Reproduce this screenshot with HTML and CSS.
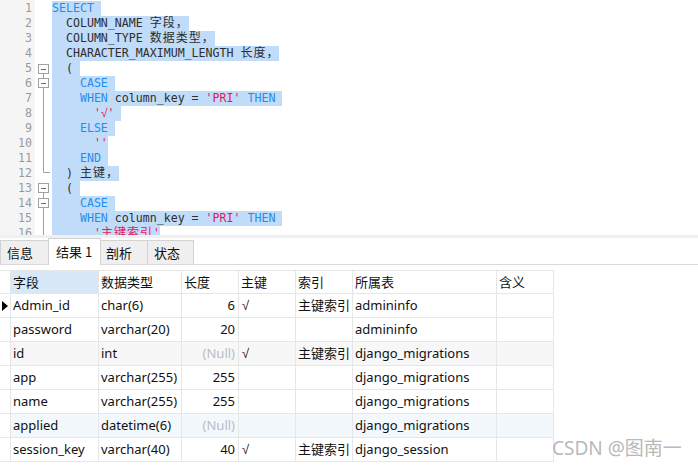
FILE: index.html
```html
<!DOCTYPE html>
<html lang="zh">
<head>
<meta charset="utf-8">
<title>SQL</title>
<link rel="stylesheet" href="styles.css">
</head>
<body>
<div class="page">
  <div class="editor">
    <div class="gutter">
      <div class="ln">1</div><div class="ln">2</div><div class="ln">3</div><div class="ln">4</div>
      <div class="ln">5</div><div class="ln">6</div><div class="ln">7</div><div class="ln">8</div>
      <div class="ln">9</div><div class="ln">10</div><div class="ln">11</div><div class="ln">12</div>
      <div class="ln">13</div><div class="ln">14</div><div class="ln">15</div><div class="ln">16</div>
    </div>
    <svg class="folds" width="17" height="235" viewBox="0 0 17 235">
      <g fill="#fff" stroke="#a0a0a0" stroke-width="1">
        <rect x="3.5" y="64.5" width="10" height="9"/>
        <rect x="3.5" y="78.5" width="10" height="9"/>
        <rect x="3.5" y="183.5" width="10" height="9"/>
        <rect x="3.5" y="198.5" width="10" height="9"/>
      </g>
      <g fill="none" stroke="#a0a0a0" stroke-width="1">
        <path d="M8.5 73.5V78.5"/>
        <path d="M8.5 87.5V172.5H15"/>
        <path d="M8.5 192.5V198.5"/>
        <path d="M8.5 207.5V235"/>
      </g>
      <g fill="none" stroke="#666" stroke-width="1">
        <path d="M6 69.5H11"/>
        <path d="M6 83.5H11"/>
        <path d="M6 188.5H11"/>
        <path d="M6 203.5H11"/>
      </g>
    </svg>
    <div class="code">
      <div class="line"><span class="sel"><span class="kw">SELECT</span> </span></div>
      <div class="line"><span class="sel">  COLUMN_NAME <span class="cj">字段，</span></span></div>
      <div class="line"><span class="sel">  COLUMN_TYPE <span class="cj">数据类型，</span></span></div>
      <div class="line"><span class="sel">  CHARACTER_MAXIMUM_LENGTH <span class="cj">长度，</span></span></div>
      <div class="line"><span class="sel">  ( </span></div>
      <div class="line"><span class="sel">    <span class="kw">CASE</span> </span></div>
      <div class="line"><span class="sel">    <span class="kw">WHEN</span> column_key = <span class="str">'PRI'</span> <span class="kw">THEN</span> </span></div>
      <div class="line"><span class="sel">      <span class="str">'<span class="ck">√</span>'</span> </span></div>
      <div class="line"><span class="sel">    <span class="kw">ELSE</span> </span></div>
      <div class="line"><span class="sel">      <span class="str">''</span></span></div>
      <div class="line"><span class="sel">    <span class="kw">END</span> </span></div>
      <div class="line"><span class="sel">  ) <span class="cj">主键，</span></span></div>
      <div class="line"><span class="sel">  ( </span></div>
      <div class="line"><span class="sel">    <span class="kw">CASE</span> </span></div>
      <div class="line"><span class="sel">    <span class="kw">WHEN</span> column_key = <span class="str">'PRI'</span> <span class="kw">THEN</span> </span></div>
      <div class="line"><span class="sel">      <span class="str">'<span class="cj">主键索引</span>'</span></span></div>
    </div>
  </div>
  <div class="strip"></div>
  <div class="tabs">
    <div class="tab">信息</div>
    <div class="tab active">结果 1</div>
    <div class="tab">剖析</div>
    <div class="tab">状态</div>
  </div>
  <div class="grid">
    <div class="c mark"></div><div class="c hsel">字段</div><div class="c">数据类型</div><div class="c">长度</div><div class="c">主键</div><div class="c">索引</div><div class="c">所属表</div><div class="c">含义</div>

    <div class="c mark"><svg width="6" height="10" viewBox="0 0 6 10"><path d="M0 0L6 5L0 10Z" fill="#000"/></svg></div><div class="c">Admin_id</div><div class="c">char(6)</div><div class="c num">6</div><div class="c ck">√</div><div class="c">主键索引</div><div class="c">admininfo</div><div class="c"></div>

    <div class="c mark"></div><div class="c">password</div><div class="c">varchar(20)</div><div class="c num">20</div><div class="c"></div><div class="c"></div><div class="c">admininfo</div><div class="c"></div>

    <div class="c mark"></div><div class="c gray">id</div><div class="c gray">int</div><div class="c gray num null">(Null)</div><div class="c gray ck">√</div><div class="c gray">主键索引</div><div class="c gray">django_migrations</div><div class="c gray"></div>

    <div class="c mark"></div><div class="c">app</div><div class="c">varchar(255)</div><div class="c num">255</div><div class="c"></div><div class="c"></div><div class="c">django_migrations</div><div class="c"></div>

    <div class="c mark"></div><div class="c">name</div><div class="c">varchar(255)</div><div class="c num">255</div><div class="c"></div><div class="c"></div><div class="c">django_migrations</div><div class="c"></div>

    <div class="c mark"></div><div class="c blue">applied</div><div class="c blue">datetime(6)</div><div class="c blue num null">(Null)</div><div class="c blue"></div><div class="c blue"></div><div class="c blue">django_migrations</div><div class="c blue"></div>

    <div class="c mark"></div><div class="c">session_key</div><div class="c">varchar(40)</div><div class="c num">40</div><div class="c ck">√</div><div class="c">主键索引</div><div class="c">django_session</div><div class="c"></div>
  </div>
  <div class="watermark">CSDN @图南一</div>
</div>
</body>
</html>
```
FILE: styles.css
```css
html, body {
  margin: 0;
  padding: 0;
  background: #fff;
}
.page {
  position: relative;
  width: 698px;
  height: 465px;
  overflow: hidden;
}
.editor {
  display: flex;
  height: 235px;
  overflow: hidden;
  background: #fff;
}
.gutter {
  width: 35px;
  flex: none;
  background: #f5f5f5;
  padding-top: 1px;
  box-sizing: border-box;
  font-family: "DejaVu Sans Mono", monospace;
  font-size: 11.6px;
  color: #9a9a9a;
  text-align: right;
}
.ln {
  height: 15px;
  line-height: 15px;
  padding-right: 3px;
}
.folds {
  flex: none;
  display: block;
}
.code {
  flex: 1;
  padding-top: 1px;
  font-family: "DejaVu Sans Mono", monospace;
  font-size: 11.6px;
  color: #2e2e2e;
}
.line {
  height: 15px;
  line-height: 15px;
  white-space: pre;
}
.sel {
  display: inline-block;
  height: 15px;
  line-height: 15px;
  vertical-align: top;
  background: #c0dcf8;
}
.kw { color: #1f8ef1; }
.str { color: #e8175d; }
.cj {
  font-family: "Noto Sans CJK SC", sans-serif;
  font-size: 12px;
  letter-spacing: 1px;
  line-height: 0;
}
.ck {
  font-family: "Liberation Sans", "Noto Sans CJK SC", sans-serif;
}
.code .ck {
  line-height: 0;
  font-size: 12px;
}
.strip {
  height: 3px;
  background: #f0f0f0;
}
.tabs {
  display: flex;
  align-items: flex-end;
  height: 27px;
  box-sizing: border-box;
  border-bottom: 1px solid #d9d9d9;
  font-family: "Noto Sans CJK SC", sans-serif;
  font-size: 13px;
  color: #111;
}
.tab {
  height: 24px;
  line-height: 23px;
  box-sizing: border-box;
  padding-left: 6px;
  background: #efefef;
  border: 1px solid #d2d2d2;
  border-bottom: none;
  margin-left: -1px;
}
.tab:nth-child(1) { width: 49px; margin-left: 0; }
.tab:nth-child(2) { width: 53px; }
.tab:nth-child(3) { width: 48px; padding-left: 5px; }
.tab:nth-child(4) { width: 47px; }
.tab.active {
  height: 27px;
  line-height: 26px;
  margin-bottom: -1px;
  background: #fff;
  position: relative;
  z-index: 1;
  padding-left: 7px;
}
.grid {
  display: grid;
  grid-template-columns: 11px 88px 83px 57px 57px 57px 144px 57px;
  grid-auto-rows: 24px;
  grid-template-rows: 23px;
  width: 554px;
  margin-top: 5px;
  border-top: 1px solid #e6e6e6;
  font-family: "Noto Sans", "Noto Sans CJK SC", sans-serif;
  font-size: 13px;
  color: #111;
}
.c {
  box-sizing: border-box;
  border-right: 1px solid #e6e6e6;
  border-bottom: 1px solid #e6e6e6;
  padding: 0 3px 0 2px;
  line-height: 23px;
  white-space: nowrap;
  overflow: hidden;
}
.grid > .c:nth-child(-n+8) {
  line-height: 22px;
}
.c.ck {
  padding-left: 3px;
}
.mark {
  padding: 0;
  display: flex;
  align-items: center;
  padding-left: 2px;
}
.mark svg { display: block; }
.hsel { background: #d9e8f7; }
.num { text-align: right; }
.null { color: #b8bcc8; }
.gray { background: #f7f7f7; }
.blue { background: #f3f8fd; }
.watermark {
  position: absolute;
  left: 552px;
  top: 439px;
  font-family: "Noto Sans", "Noto Sans CJK SC", sans-serif;
  font-size: 19px;
  line-height: 19px;
  color: #b9b9b9;
  white-space: nowrap;
}
```
